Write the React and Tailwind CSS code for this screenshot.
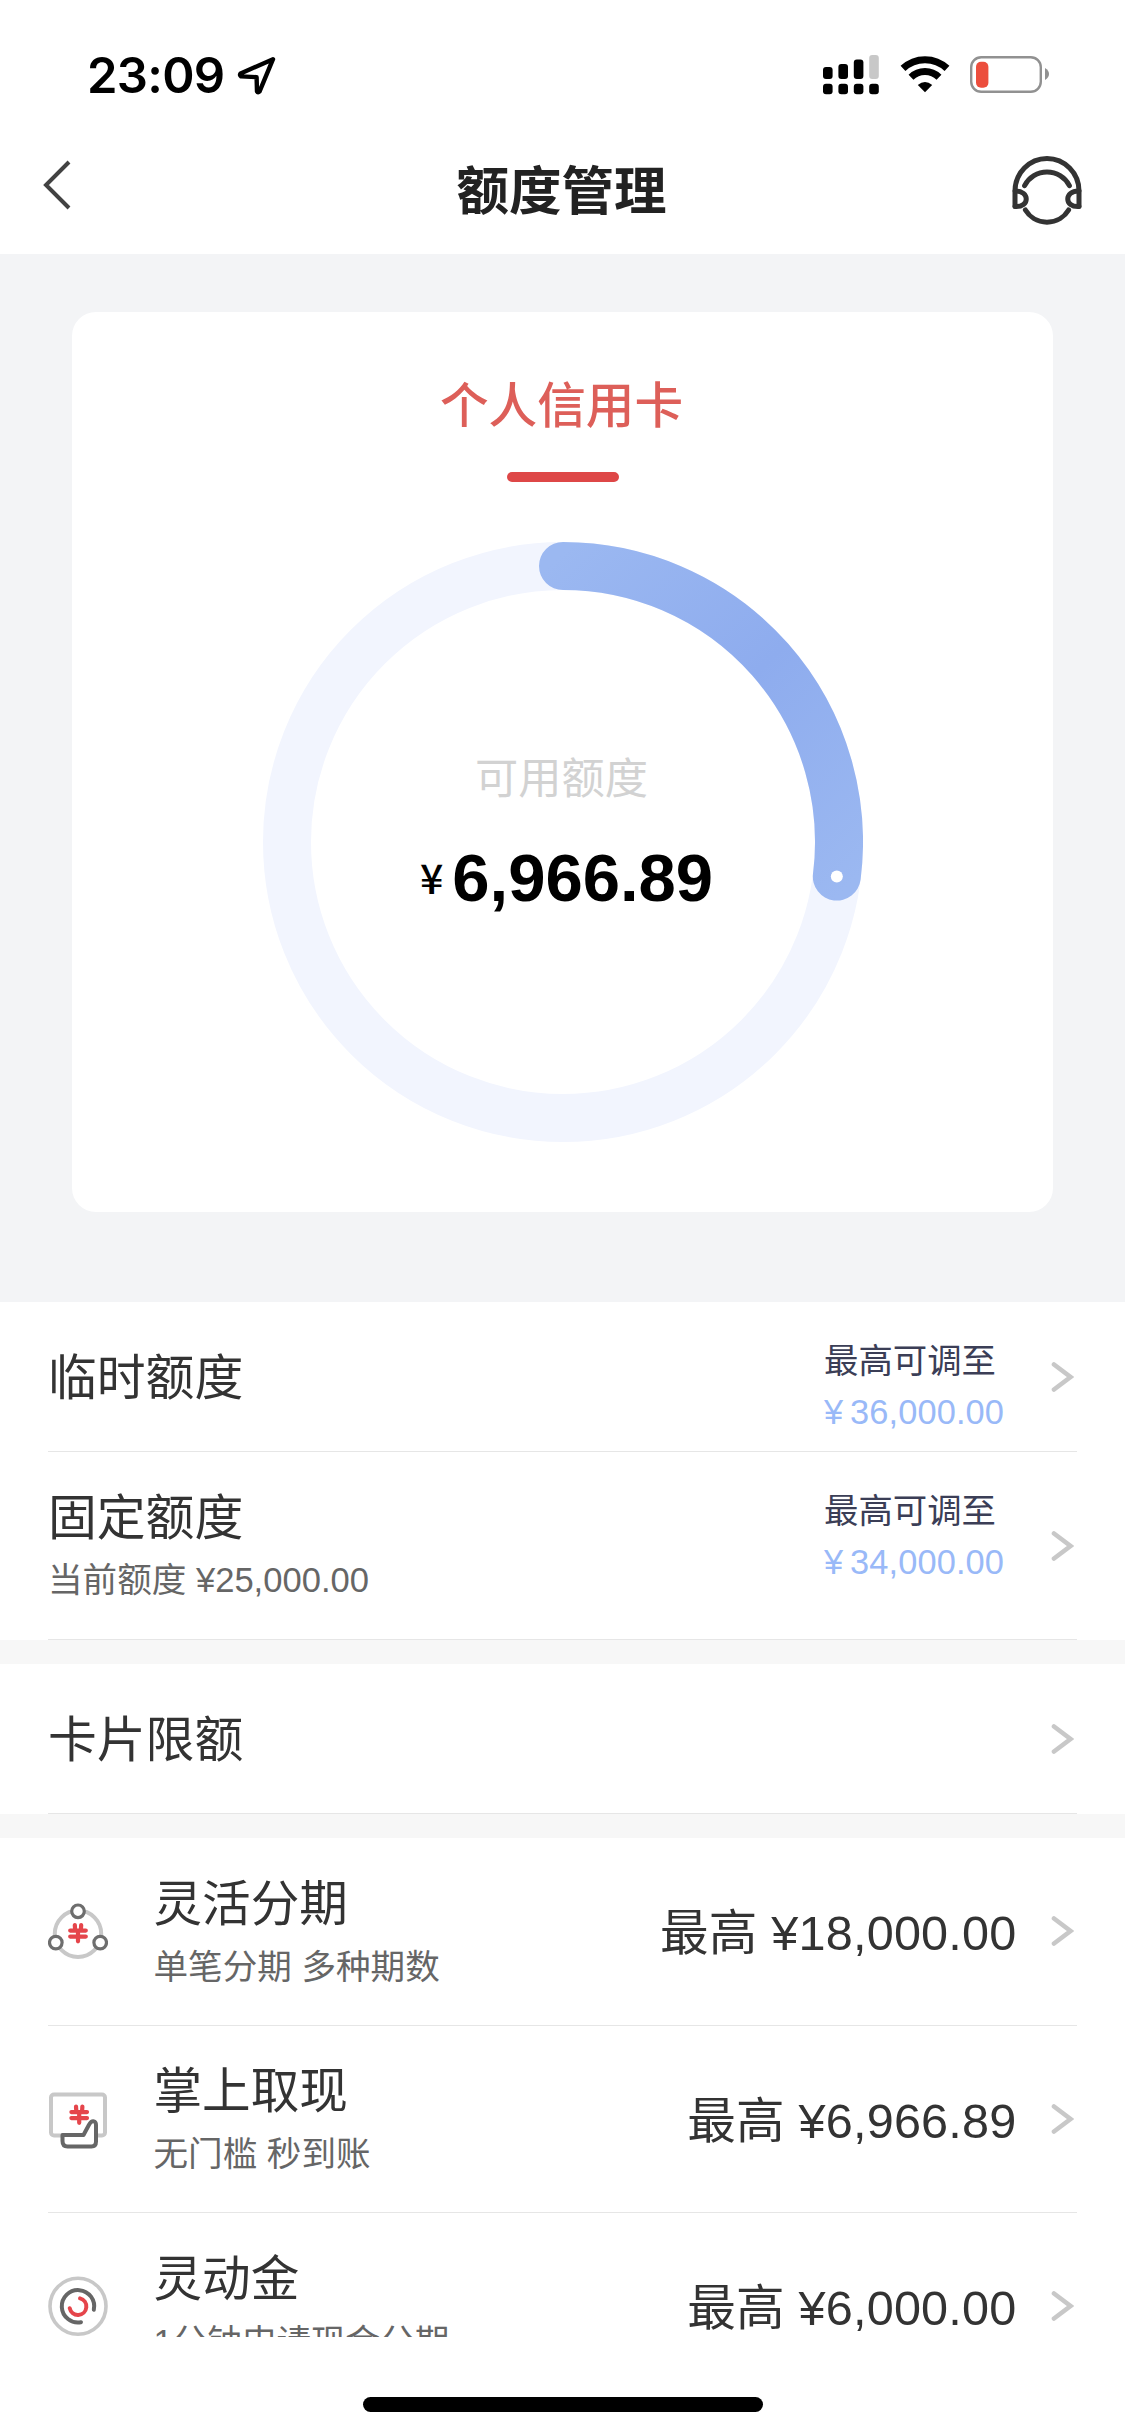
import { useState } from "react";

const RING_RADIUS = 276;
const RING_SWEEP = 97.2;

const products = [
  { id: "flex", icon: FlexIcon, title: "灵活分期", desc: "单笔分期 多种期数", amount: "¥18,000.00" },
  { id: "cash", icon: CashIcon, title: "掌上取现", desc: "无门槛 秒到账", amount: "¥6,966.89" },
  { id: "gold", icon: GoldIcon, title: "灵动金", desc: "1分钟申请现金分期", amount: "¥6,000.00" },
];

function StatusBar() {
  return (
    <div className="flex h-[108px] items-start justify-between pl-[87px] pr-[75px] pt-[52px]">
      <div className="flex items-start">
        <span className="mt-px w-[150px] whitespace-nowrap font-['Inter'] text-[49px] font-semibold leading-[46px] tracking-[-0.7px] text-black">23:09</span>
        <svg className="mt-[4px]" width="40" height="40" viewBox="0 0 40 40" fill="none">
          <path d="M36 3.2 L3.6 17.4 Q2.2 19.2 4 20.4 L19.6 21.2 L20 35.4 Q21 37.2 22.5 35.6 Z" stroke="#000" strokeWidth="4.4" strokeLinejoin="round" />
        </svg>
      </div>
      <div className="flex items-start">
        <svg width="58" height="44" viewBox="0 0 58 44">
          <rect x="0" y="15" width="9.6" height="12" rx="3" />
          <rect x="15.4" y="12" width="9.6" height="15" rx="3" />
          <rect x="30.8" y="7.5" width="9.6" height="19.5" rx="3" />
          <rect x="46.2" y="3" width="9.6" height="24" rx="3" fill="#c8c8c8" />
          <rect x="0" y="31.7" width="9.6" height="10.6" rx="3" />
          <rect x="15.4" y="31.7" width="9.6" height="10.6" rx="3" />
          <rect x="30.8" y="31.7" width="9.6" height="10.6" rx="3" />
          <rect x="46.2" y="31.7" width="9.6" height="10.6" rx="3" />
        </svg>
        <svg className="ml-[19px]" width="50" height="44" viewBox="0 0 50 44">
          <path d="M3 16.4 A32 32 0 0 1 47 16.4" fill="none" stroke="#000" strokeWidth="7" />
          <path d="M11 25.2 A20 20 0 0 1 39 25.2" fill="none" stroke="#000" strokeWidth="7" />
          <path d="M25 40.3 L17.8 33 Q25 27 32.2 33 Z" />
        </svg>
        <svg className="ml-[20px]" width="80" height="44" viewBox="0 0 80 44">
          <rect x="1.2" y="5.2" width="69.6" height="34.6" rx="10" fill="none" stroke="#919191" strokeWidth="2.4" />
          <rect x="6" y="9.7" width="12.4" height="26" rx="5" fill="#ec4e3d" />
          <path d="M75 16 Q79 18.5 79 22 Q79 25.5 75 28 Z" fill="#919191" />
        </svg>
      </div>
    </div>
  );
}

function Header() {
  return (
    <header className="flex h-[146px] items-start justify-between pl-[42px] pr-[42px]">
      <svg className="mt-[50px]" width="70" height="54" viewBox="0 0 70 54" fill="none">
        <path d="M27 4 L4 27 L27 50" stroke="#424242" strokeWidth="4" />
      </svg>
      <h1 className="mt-[50px] text-[52.5px] font-bold leading-[68px] text-[#222]">额度管理</h1>
      <svg className="mt-[46px]" width="72" height="74" viewBox="0 0 72 74" fill="none" stroke="#333" strokeWidth="5" strokeLinecap="round" strokeLinejoin="round">
        <path d="M4 52 V37 A32 32.5 0 0 1 68 37 V52" />
        <path d="M4 37 C19 36.5 19 53.5 4 52.5" />
        <path d="M68 37 C53 36.5 53 53.5 68 52.5" />
        <path d="M13.6 31.7 A25.2 25.2 0 0 1 58.4 31.7" />
        <path d="M14.4 56 A25.2 25.2 0 0 0 57.6 56" />
      </svg>
    </header>
  );
}

function LimitRing() {
  const angle = (RING_SWEEP * Math.PI) / 180;
  const endX = 300 + RING_RADIUS * Math.sin(angle);
  const endY = 300 - RING_RADIUS * Math.cos(angle);

  return (
    <div className="relative mt-[60px] h-[600px] w-[600px]">
      <svg width="600" height="600" viewBox="0 0 600 600" fill="none">
        <defs>
          <linearGradient id="ring" gradientUnits="userSpaceOnUse" x1="290" y1="20" x2="590" y2="340">
            <stop offset="0" stopColor="#9bb8f1" />
            <stop offset="0.5" stopColor="#8eacee" />
            <stop offset="1" stopColor="#9bb8f1" />
          </linearGradient>
        </defs>
        <circle cx="300" cy="300" r={RING_RADIUS} stroke="#f2f5fe" strokeWidth="48" />
        <path d={`M300 24 A${RING_RADIUS} ${RING_RADIUS} 0 0 1 ${endX} ${endY}`} stroke="url(#ring)" strokeWidth="48" strokeLinecap="round" />
        <circle cx={endX} cy={endY} r="6" fill="#fff" />
      </svg>
      <div className="absolute inset-0 flex flex-col items-center pr-[2px] pt-[207px]">
        <p className="text-[43.2px] leading-[60px] text-[#d2d2d2]">可用额度</p>
        <p className="mt-[31px] flex items-baseline whitespace-nowrap pl-[10px] text-black">
          <span className="relative -top-[7px] mr-[9px] font-['Noto_Sans_CJK_SC'] text-[41px] font-medium leading-[62px]">¥</span>
          <span className="text-[67px] font-bold leading-[76px]">6,966.89</span>
        </p>
      </div>
    </div>
  );
}

function Chevron() {
  return (
    <svg className="shrink-0" width="24" height="32" viewBox="0 0 24 32" fill="none">
      <path d="M4 3.5 L20.5 16 L4 28.5" stroke="#c8c8c8" strokeWidth="4.6" strokeLinecap="round" />
    </svg>
  );
}

// Small red currency mark shared by the product icons
function YuanMark({ x, y }) {
  return (
    <g transform={`translate(${x} ${y})`} stroke="#e5454b" strokeWidth="4.2" strokeLinecap="round">
      <path d="M-3.2 -8 L-2.8 -2.4 M3.2 -8 L2.8 -2.4 M-7.8 -2.4 H7.8 M-7.8 3.6 H7.8 M0 -1 V8.3" />
    </g>
  );
}

function FlexIcon() {
  return (
    <svg width="60" height="60" viewBox="0 0 60 60" fill="none">
      <circle cx="30" cy="32.8" r="23.2" stroke="#c8c8c8" strokeWidth="4" />
      <g fill="#fff" stroke="#6e6e6e" strokeWidth="3.2">
        <circle cx="30" cy="10.3" r="6.3" />
        <circle cx="7.8" cy="41.6" r="6.3" />
        <circle cx="52.2" cy="41.6" r="6.3" />
      </g>
      <YuanMark x={30} y={32} />
    </svg>
  );
}

function CashIcon() {
  return (
    <svg width="60" height="60" viewBox="0 0 60 60" fill="none">
      <rect x="3" y="5.5" width="54" height="41" rx="3" stroke="#c8c8c8" strokeWidth="4" />
      <YuanMark x={31.2} y={25.5} />
      <path d="M14.5 46 H35.5 L41 35.7 Q43.5 31.5 46 32.4 Q48 33 48 36 V52.5 Q48 57.4 43.5 57.4 H19.5 Q14.5 57.4 14.5 52 Z" fill="#fff" stroke="#666" strokeWidth="4" strokeLinejoin="round" />
    </svg>
  );
}

function GoldIcon() {
  return (
    <svg width="60" height="60" viewBox="0 0 60 60" fill="none" strokeLinecap="round">
      <circle cx="30" cy="30.2" r="28" stroke="#c8c8c8" strokeWidth="3.6" />
      <path d="M45.8 33.8 A16.2 16.2 0 1 0 33 46.2" stroke="#666" strokeWidth="4" />
      <path d="M32 22.4 A8.4 8.4 0 1 1 21.7 32.2" stroke="#e5454b" strokeWidth="4" />
    </svg>
  );
}

function LimitRow({ title, desc, amount, tall }) {
  return (
    <div className={`ml-12 mr-12 flex items-center border-b border-[#e6e6e6] ${tall ? "h-[188px]" : "h-[150px]"}`}>
      <div className={`flex-1 ${tall ? "pt-[5px]" : "pt-[3px]"}`}>
        <h2 className="text-[48.8px] leading-[64px] text-[#333]">{title}</h2>
        {desc && <p className="text-[34.6px] leading-[61px] text-[#666]">{desc}</p>}
      </div>
      {amount && (
        <div className="mr-[46px] h-full w-[180px] whitespace-nowrap pt-[33px]">
          <p className="text-[34.4px] leading-[52px] text-[#3b3e56]">最高可调至</p>
          <p className="flex items-baseline text-[34.4px] leading-[51px] text-[#99b9f8]">
            <span className="w-[27px]">¥</span>
            <span className="tracking-[0.1px]">{amount}</span>
          </p>
        </div>
      )}
      <div className="mr-[3px]">
        <Chevron />
      </div>
    </div>
  );
}

function ProductRow({ item }) {
  const Icon = item.icon;
  return (
    <div className="ml-12 mr-12 flex h-[187.6px] shrink-0 items-center border-b border-[#e6e6e6]">
      <Icon />
      <div className="ml-[45.5px] flex-1 whitespace-nowrap pt-[7px]">
        <h2 className="text-[48.6px] leading-[64px] text-[#333]">{item.title}</h2>
        <p className="text-[34.6px] leading-[62px] text-[#666]">{item.desc}</p>
      </div>
      <p className="mr-[33.5px] whitespace-nowrap pt-[4px] text-[48.6px] leading-[64px] tracking-[0.2px] text-[#333]">最高 {item.amount}</p>
      <div className="mr-[3px]">
        <Chevron />
      </div>
    </div>
  );
}

const App = () => {
  const [items] = useState(products);

  return (
    <div className="flex h-[2435px] w-[1125px] flex-col overflow-hidden bg-white font-['Liberation_Sans','Noto_Sans_CJK_SC',sans-serif]">
      <StatusBar />
      <Header />
      <main className="h-[2083px] overflow-hidden">
        <section className="flex h-[1048px] justify-center bg-[#f3f4f6] pt-[58px]">
          <div className="flex h-[900px] w-[981px] flex-col items-center rounded-[24px] bg-white pt-[60px]">
            <h2 className="pr-[2px] text-[48.6px] font-medium leading-[68px] text-[#dd5f59]">个人信用卡</h2>
            <div className="mt-[32px] h-[10px] w-[112px] rounded-full bg-[#de4747]" />
            <LimitRing />
          </div>
        </section>
        <LimitRow title="临时额度" amount="36,000.00" />
        <LimitRow title="固定额度" desc="当前额度 ¥25,000.00" amount="34,000.00" tall />
        <div className="h-6 bg-[#f7f7f7]" />
        <LimitRow title="卡片限额" />
        <div className="h-6 bg-[#f7f7f7]" />
        {items.map((item) => (
          <ProductRow key={item.id} item={item} />
        ))}
      </main>
      <div className="flex justify-center pt-[60px]">
        <div className="h-[15px] w-[400px] rounded-full bg-black" />
      </div>
    </div>
  );
};

export default App;
